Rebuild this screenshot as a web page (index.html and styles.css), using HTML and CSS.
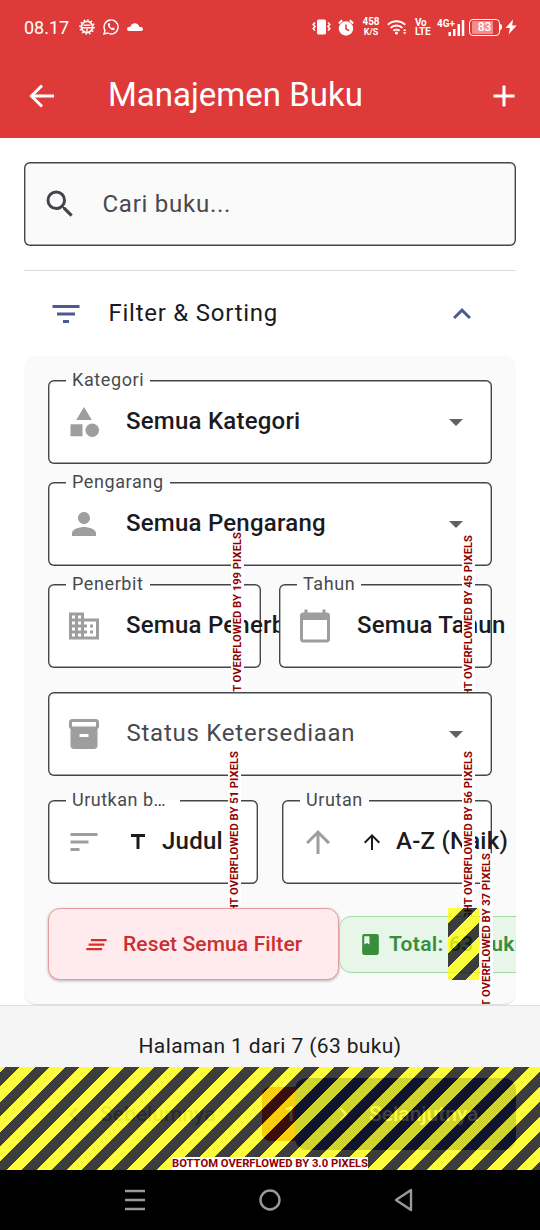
FILE: index.html
```html
<!DOCTYPE html>
<html lang="id">
<head>
<meta charset="utf-8">
<title>Manajemen Buku</title>
<link rel="stylesheet" href="styles.css">
</head>
<body>
<div class="app">
  <header class="header">
    <div class="status">
      <span class="clock">08.17</span>
      <svg class="st-gear" width="16" height="16" viewBox="0 0 16 16" fill="none" stroke="#fff"><circle cx="8" cy="8" r="5.600" stroke-width="1.700"/><circle cx="8" cy="8" r="7" stroke-width="1.600" stroke-dasharray="1.600 2.060"/><path d="M4.500 6.300h7M3 8.800h10M8 8.800v4" stroke-width="1.400"/></svg>
      <svg class="st-wa" width="16" height="16" viewBox="0 0 16 16"><path d="M1 15l1-3.600A7 7 0 1 1 4.600 14z" fill="none" stroke="#fff" stroke-width="1.400"/><path d="M5.500 4.200c-1 .8-.9 2.400.6 4.300 1.700 2.200 3.900 3.300 5.100 2.300.7-.6.700-1.200.3-1.500l-1.300-.8c-.5-.2-.9.700-1.300.6C8 8.700 7 7.700 6.700 6.800c0-.4.600-.6.500-1.100l-.6-1.300c-.2-.4-.7-.5-1.100-.2z" fill="#fff"/></svg>
      <svg class="st-cloud" width="16" height="10" viewBox="0 0 16 10"><path d="M2 9a2 2 0 0 1 0-4l1.500-.5A4.600 4.600 0 0 1 11.500 3l1 2h1.200a2 2 0 0 1 .5 4z" fill="#fff"/></svg>
      <span class="grow"></span>
      <svg class="st-vib" width="19" height="16" viewBox="0 0 19 16"><rect x="5" y="0.500" width="9" height="15" rx="1.500" fill="#fff"/><path d="M3 3.500L1.200 5.500 3 7.500 1.200 9.500 3 11.500M16 3.500l1.800 2-1.800 2 1.800 2-1.800 2" fill="none" stroke="#fff" stroke-width="1.600"/></svg>
      <svg class="st-alarm" width="16" height="17" viewBox="0 0 16 17"><circle cx="8" cy="9.500" r="7.200" fill="#fff"/><path d="M.8 4.500L4.200 1.200M15.200 4.500L11.800 1.200" stroke="#fff" stroke-width="1.900"/><path d="M8 5.500V10l3 1.500" fill="none" stroke="#dd3a39" stroke-width="1.500"/></svg>
      <span class="tiny speed">458<br><small>K/S</small></span>
      <svg class="st-wifi" width="20" height="16" viewBox="0 0 20 16"><g fill="none" stroke="#fff" stroke-width="1.900"><path d="M.8 5.800a12.500 12.500 0 0 1 17.400 0"/><path d="M3.600 8.900a8.500 8.500 0 0 1 11.800 0"/><path d="M6.400 11.800a4.600 4.600 0 0 1 6.200 0"/></g><circle cx="9.500" cy="14" r="1.600" fill="#fff"/><path d="M16 12l1.700-2.300 1.700 2.300zM16 13.300h3.400l-1.700 2.300z" fill="#fff"/></svg>
      <span class="tiny volte">Vo<br>LTE</span>
      <span class="signal"><b>4G+</b><svg width="17" height="17" viewBox="0 0 17 17" fill="#fff"><path d="M.5 13H3v4H.5zM5 10h2.500v7H5zM9.500 5H12v12H9.500zM13.800 1h2.500v16h-2.500z"/></svg></span>
      <span class="battery">83</span><i class="nub"></i>
      <svg class="st-bolt" width="12" height="16" viewBox="0 0 12 16"><path d="M8 .5L.5 9H5L3.500 15.500 11.700 6.500H7.200z" fill="#fff"/></svg>
    </div>
    <div class="bar">
      <svg width="36" height="36" viewBox="0 0 24 24"><path d="M20 12H5M12 5l-7 7 7 7" fill="none" stroke="#fff" stroke-width="2"/></svg>
      <h1>Manajemen Buku</h1>
      <svg width="36" height="36" viewBox="0 0 24 24"><path d="M19 13h-6v6h-2v-6H5v-2h6V5h2v6h6z" fill="#fff"/></svg>
    </div>
  </header>

  <main class="content">
    <div class="search outline">
      <svg width="36" height="36" viewBox="0 0 24 24"><path fill="#44454a" d="M15.500 14h-.79l-.28-.27A6.471 6.471 0 0 0 16 9.500 6.500 6.500 0 1 0 9.500 16c1.610 0 3.090-.59 4.230-1.570l.27.28v.79l5 4.990L20.490 19l-4.990-5zm-6 0C7.010 14 5 11.990 5 9.500S7.010 5 9.500 5 14 7.010 14 9.500 11.990 14 9.500 14z"/></svg>
      <span>Cari buku...</span>
    </div>
    <div class="expander">
      <svg width="36" height="36" viewBox="0 0 24 24"><path fill="#4d5a92" d="M10 18h4v-2h-4v2zM3 6v2h18V6H3zm3 7h12v-2H6v2z"/></svg>
      <span>Filter &amp; Sorting</span>
      <svg width="36" height="36" viewBox="0 0 24 24"><path fill="#4d5a92" d="M12 8l-6 6 1.410 1.410L12 10.830l4.590 4.580L18 14z"/></svg>
    </div>

    <section class="panel">
      <div class="field outline">
        <label>Kategori</label>
        <svg class="ic" viewBox="0 0 24 24"><path d="M12 2l-5.200 8.700h10.400z"/><circle cx="17.500" cy="17.500" r="4.500"/><path d="M3 13.500h8v8H3z"/></svg>
        <span class="val">Semua Kategori</span><i class="caret"></i>
      </div>
      <div class="field outline g18">
        <label>Pengarang</label>
        <svg class="ic" viewBox="0 0 24 24"><path d="M12 12c2.210 0 4-1.790 4-4s-1.790-4-4-4-4 1.790-4 4 1.790 4 4 4zm0 2c-2.670 0-8 1.340-8 4v2h16v-2c0-2.660-5.330-4-8-4z"/></svg>
        <span class="val">Semua Pengarang</span><i class="caret"></i>
      </div>
      <div class="pair g18 pair-a">
        <div class="field outline">
          <label>Penerbit</label>
          <svg class="ic" viewBox="0 0 24 24"><path d="M12 7V3H2v18h20V7H12zM6 19H4v-2h2v2zm0-4H4v-2h2v2zm0-4H4V9h2v2zm0-4H4V5h2v2zm4 12H8v-2h2v2zm0-4H8v-2h2v2zm0-4H8V9h2v2zm0-4H8V5h2v2zm10 12h-8v-2h2v-2h-2v-2h2v-2h-2V9h8v10zm-2-8h-2v2h2v-2zm0 4h-2v2h2v-2z"/></svg>
          <span class="val">Semua Penerbit</span>
          <b class="over ov-publisher">RIGHT OVERFLOWED BY 199 PIXELS</b>
        </div>
        <div class="field outline">
          <label>Tahun</label>
          <svg class="ic" viewBox="0 0 24 24"><path d="M20 3h-1V1h-2v2H7V1H5v2H4c-1.100 0-2 .9-2 2v16c0 1.100.9 2 2 2h16c1.100 0 2-.9 2-2V5c0-1.100-.9-2-2-2zm0 18H4V8h16v13z"/></svg>
          <span class="val">Semua Tahun</span>
          <b class="over ov-year">RIGHT OVERFLOWED BY 45 PIXELS</b>
        </div>
      </div>
      <div class="field outline g24">
        <svg class="ic" viewBox="0 0 24 24"><path d="M20 2H4c-1 0-2 .9-2 2v3.010c0 .72.43 1.340 1 1.690V20c0 1.100 1.100 2 2 2h14c.9 0 2-.9 2-2V8.700c.57-.35 1-.97 1-1.690V4c0-1.100-1-2-2-2zm-5 12H9v-2h6v2zm5-7H4V4h16v3z"/></svg>
        <span class="hint">Status Ketersediaan</span><i class="caret"></i>
      </div>
      <div class="pair g24 pair-b">
        <div class="field outline">
          <label class="cut">Urutkan b…</label>
          <svg class="ic" viewBox="0 0 24 24"><path d="M3 18h6v-2H3v2zM3 6v2h18V6H3zm0 7h12v-2H3v2z"/></svg>
          <svg class="sub" viewBox="0 0 24 24"><path d="M5 4v3h5.500v12h3V7H19V4z"/></svg>
          <span class="val">Judul</span>
          <b class="over ov-sort">RIGHT OVERFLOWED BY 51 PIXELS</b>
        </div>
        <div class="field outline">
          <label>Urutan</label>
          <svg class="ic" viewBox="0 0 24 24"><path d="M4 12l1.410 1.410L11 7.830V20h2V7.830l5.580 5.590L20 12l-8-8-8 8z"/></svg>
          <svg class="sub" viewBox="0 0 24 24"><path d="M4 12l1.410 1.410L11 7.830V20h2V7.830l5.580 5.590L20 12l-8-8-8 8z"/></svg>
          <span class="val">A-Z (Naik)</span>
          <b class="over ov-order">RIGHT OVERFLOWED BY 56 PIXELS</b>
        </div>
      </div>
      <div class="actions g24">
        <button class="reset"><svg width="27" height="27" viewBox="0 0 24 24"><path fill="#d32f2f" d="M5 13h14v-2H5v2zm-2 4h14v-2H3v2zM7 7v2h14V7H7z"/></svg>Reset Semua Filter</button>
        <div class="total"><svg width="25" height="25" viewBox="0 0 24 24"><path fill="#388e3c" d="M18 2H6c-1.100 0-2 .9-2 2v16c0 1.100.9 2 2 2h12c1.100 0 2-.9 2-2V4c0-1.100-.9-2-2-2zM6 4h5v8l-2.500-1.500L6 12V4z"/></svg>Total: 63 buku</div>
        <i class="hazard"></i>
        <b class="over ov-actions">RIGHT OVERFLOWED BY 37 PIXELS</b>
      </div>
    </section>
  </main>

  <footer class="pager">
    <p>Halaman 1 dari 7 (63 buku)</p>
    <div class="pages">
      <span class="prev"><svg width="27" height="27" viewBox="0 0 24 24"><path d="M15.400 7.400L14 6l-6 6 6 6 1.400-1.400L10.800 12z" fill="#aaa"/></svg>Sebelumnya</span>
      <span class="current">1</span>
      <span class="next"><svg width="27" height="27" viewBox="0 0 24 24"><path d="M8.600 16.600L10 18l6-6-6-6-1.400 1.400L13.200 12z" fill="#fff"/></svg>Selanjutnya</span>
    </div>
    <div class="hazard-wide"><b>BOTTOM OVERFLOWED BY 3.0 PIXELS</b></div>
  </footer>

  <nav class="nav">
    <svg width="22" height="24" viewBox="0 0 22 24"><path d="M1 3h20M1 12h20M1 21h20" stroke="#999" stroke-width="2.600"/></svg>
    <svg width="24" height="24" viewBox="0 0 24 24"><circle cx="12" cy="12" r="9.500" fill="none" stroke="#999" stroke-width="2.400"/></svg>
    <svg width="22" height="24" viewBox="0 0 22 24"><path d="M17 2v20L2 12z" fill="none" stroke="#999" stroke-width="2.400" stroke-linejoin="round"/></svg>
  </nav>
</div>
</body>
</html>
```
FILE: styles.css
```css
* { box-sizing: border-box; }
body { margin: 0; font-family: Roboto, "Noto Sans", sans-serif; color: #1b1b1f; background: #fff; }
svg { display: block; flex: none; }
.app { width: 540px; height: 1230px; display: flex; flex-direction: column; overflow: hidden; white-space: nowrap; }

.header { height: 138px; background: #dd3a39; color: #fff; flex: none; }
.status { height: 54px; padding: 0 23px 0 24px; display: flex; align-items: center; }
.clock { font-size: 18px; width: 46px; padding-top: 1px; }
.st-gear { margin-left: 9px; }
.st-wa { margin-left: 8px; }
.st-cloud { margin-left: 8px; }
.grow { flex: 1; }
.st-alarm { margin-left: 7px; }
.tiny { font-size: 10px; line-height: 9.500px; font-weight: 700; }
.tiny small { font-size: 9px; }
.speed { width: 18px; margin-left: 8px; text-align: center; }
.st-wifi { margin-left: 7px; }
.volte { width: 16px; margin-left: 8px; letter-spacing: -0.300px; }
.signal { display: flex; margin-left: 6px; width: 28px; }
.signal b { font-size: 10px; line-height: 10px; width: 11px; flex: none; }
.battery { width: 31px; height: 17px; margin-left: 4px; border: 1px solid #fff; border-radius: 4px; font-size: 12px; font-weight: 500; text-align: center; background: linear-gradient(90deg, #ef8f8d 83%, transparent 83%) content-box; padding: 1px 2px; line-height: 13px; }
.nub { width: 2px; height: 6px; background: #fff; border-radius: 0 2px 2px 0; }
.st-bolt { margin-left: 3px; }
.bar { height: 84px; padding: 0 18px 0 24px; display: flex; align-items: center; }
.bar h1 { margin: -3px 0 0 48px; font-size: 33px; font-weight: 400; flex: 1; }

.content { height: 867px; padding: 24px 24px 0; flex: none; }
.outline { border-radius: 6px; box-shadow: inset 0 0 0 1.400px #45464c; }
.search { height: 84px; padding-left: 18px; display: flex; align-items: center; background: #fafafa; }
.search span { margin: -1px 0 0 24.500px; font-size: 24px; letter-spacing: .75px; color: #48494f; }
.expander { margin-top: 24px; height: 86px; padding: 0 36px 0 24px; border-top: 1px solid #dcdcdc; display: flex; align-items: center; }
.expander span { flex: 1; margin: -2px 0 0 24.500px; font-size: 24px; letter-spacing: .75px; }

.panel { height: 649px; padding: 24px 24px 0; background: #fafafa; border-radius: 12px; overflow: hidden; border-bottom: 1px solid #dcdcdc; }
.g18 { margin-top: 18px; }
.g24 { margin-top: 24px; }
.field { position: relative; height: 84px; padding: 0 24px 0 18px; display: flex; align-items: center; background: #fff; }
.field label { position: absolute; left: 18px; top: -11px; padding: 0 6px; font-size: 18px; line-height: 21px; letter-spacing: .6px; color: #48494f; background: linear-gradient(#fff, #fff) 0 11px / 100% 2px no-repeat; }
.field .cut { width: 114px; letter-spacing: .5px; }
.ic { width: 36px; height: 36px; fill: #9e9e9e; }
.val { margin: -2px 0 0 24px; font-size: 24px; font-weight: 500; letter-spacing: .225px; }
.hint { margin: -2px 0 0 24.500px; font-size: 24px; letter-spacing: .75px; color: #48494f; }
.caret { margin-left: auto; margin-right: 5px; border: 7px solid transparent; border-top-color: #616161; border-bottom: 0; }
.pair { display: grid; }
.pair-a { grid-template-columns: 213px 213px; column-gap: 18px; }
.pair-b { grid-template-columns: 210px 210px; column-gap: 24px; }
.sub { width: 24px; height: 24px; margin-left: 24px; fill: #1b1b1f; }
.sub + .val { margin-left: 12px; }

.over { position: absolute; writing-mode: vertical-rl; transform: rotate(180deg); width: 13px; line-height: 13px; font-size: 11.250px; font-weight: 700; color: #900000; background: #fff; }
.ov-publisher { left: 183px; top: -52px; }
.ov-year { left: 183px; top: -49px; }
.ov-sort { left: 180px; top: -49px; }
.ov-order { left: 180px; top: -49px; }
.ov-actions { left: 432px; top: -55px; }

.actions { position: relative; height: 72px; display: flex; align-items: center; }
.reset { width: 291px; height: 72px; flex: none; padding: 0 0 0 34px; display: flex; align-items: center; gap: 13px; font: 500 21px Roboto, sans-serif; letter-spacing: .120px; color: #c9302f; background: #ffebee; border: 1px solid #e59a9d; border-radius: 12px; box-shadow: 0 1px 3px rgba(0,0,0,.3); }
.total { width: 235px; height: 57px; flex: none; padding-left: 18px; display: flex; align-items: center; gap: 6px; font-size: 21px; font-weight: 600; letter-spacing: .300px; color: #388e3c; background: #e8f5e9; border: 1px solid #a5d6a7; border-radius: 12px; }
.hazard { position: absolute; left: 400px; top: 0; width: 31px; height: 72px; background: repeating-linear-gradient(135deg, rgba(255,255,0,.75) 0 10.607px, rgba(0,0,0,.75) 10.607px 21.213px); }

.pager { position: relative; height: 165px; flex: none; background: #f5f5f5; border-top: 1px solid #e0e0e0; }
.pager p { margin: 0; padding-top: 25px; text-align: center; font-size: 21px; line-height: 30px; letter-spacing: .375px; }
.pages { margin: 17px 24px 0; height: 72px; display: flex; align-items: center; font-size: 21px; font-weight: 500; }
.prev { width: 238px; padding-left: 36px; display: flex; align-items: center; gap: 13px; color: #aaa; }
.current { width: 57px; height: 54px; flex: none; margin-right: -24px; border-radius: 8px; background: #e53935; color: #fff; text-align: center; line-height: 54px; }
.next { position: relative; flex: 1; height: 72px; padding-left: 35px; display: flex; align-items: center; gap: 12px; border-radius: 12px; background: #3f51b5; color: #fff; }
.hazard-wide { position: absolute; left: 0; right: 0; bottom: 0; height: 103px; display: flex; align-items: flex-end; justify-content: center; background: repeating-linear-gradient(135deg, rgba(255,255,0,.75) 0 3.536px, rgba(0,0,0,.75) 3.536px 14.142px, rgba(255,255,0,.75) 14.142px 21.213px); }
.hazard-wide b { font-size: 11.250px; line-height: 12px; padding-top: 1px; color: #900000; background: #fff; }

.nav { height: 60px; flex: none; background: #000; padding: 0 124px; display: flex; align-items: center; justify-content: space-between; }
```
